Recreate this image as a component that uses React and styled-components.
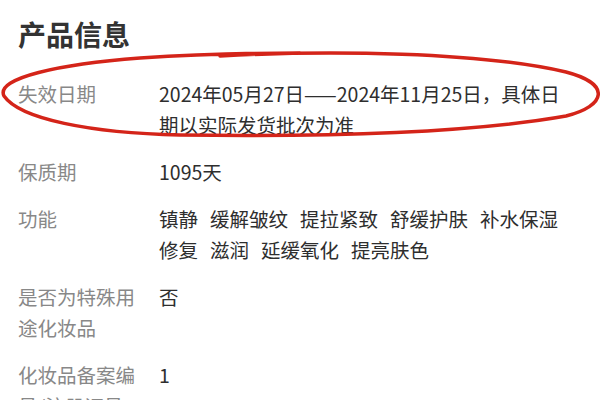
import React from "react";
import styled, { createGlobalStyle } from "styled-components";

const Global = createGlobalStyle`
  html, body { margin: 0; padding: 0; background: #fff; }
  body { font-family: "Noto Sans CJK SC", "Noto Sans", sans-serif; }
`;

const Page = styled.div`
  position: relative;
  width: 600px;
  height: 400px;
  overflow: hidden;
  background: #fff;
  padding: 14px 18px 0 18px;
  box-sizing: border-box;
`;

const Title = styled.h1`
  margin: 0 0 24px 0;
  font-size: 28px;
  line-height: 40px;
  font-weight: 700;
  color: #333;
  letter-spacing: 0;
`;

const List = styled.div`
  display: flex;
  flex-direction: column;
  gap: 16px;
`;

const Row = styled.div`
  display: grid;
  grid-template-columns: 124px 1fr;
  column-gap: 17px;
  font-size: 19.5px;
  line-height: 31px;
  padding-right: 8px;
`;

const Label = styled.div`
  color: #888;
`;

const Value = styled.div`
  color: #2e2e2e;
`;

const Tag = styled.span`
  margin-right: 12px;
`;

const Annotation = styled.svg`
  position: absolute;
  left: 0;
  top: 0;
  pointer-events: none;
`;

const rows = [
  { label: "失效日期", value: "2024年05月27日——2024年11月25日，具体日期以实际发货批次为准" },
  { label: "保质期", value: "1095天" },
  {
    label: "功能",
    tags: ["镇静", "缓解皱纹", "提拉紧致", "舒缓护肤", "补水保湿", "修复", "滋润", "延缓氧化", "提亮肤色"],
  },
  { label: "是否为特殊用途化妆品", value: "否" },
  { label: "化妆品备案编号/注册证号", value: "1" },
];

export default function App() {
  return (
    <>
      <Global />
      <Page>
        <Title>产品信息</Title>
        <List>
          {rows.map((r) => (
            <Row key={r.label}>
              <Label>{r.label}</Label>
              <Value>
                {r.tags ? r.tags.map((t) => <Tag key={t}>{t}</Tag>) : r.value}
              </Value>
            </Row>
          ))}
        </List>
        <Annotation width="600" height="400" viewBox="0 0 600 400">
          <path
            d="M 220 56 C 330 50, 480 52, 566 72 C 612 84, 606 106, 566 116 C 470 133, 330 137, 180 135 C 90 133, 20 119, 4 96 C -5 78, 60 64, 140 58 C 200 54, 260 53, 300 53"
            fill="none"
            stroke="#d42419"
            strokeWidth="3.5"
            strokeLinecap="round"
          />
        </Annotation>
      </Page>
    </>
  );
}
